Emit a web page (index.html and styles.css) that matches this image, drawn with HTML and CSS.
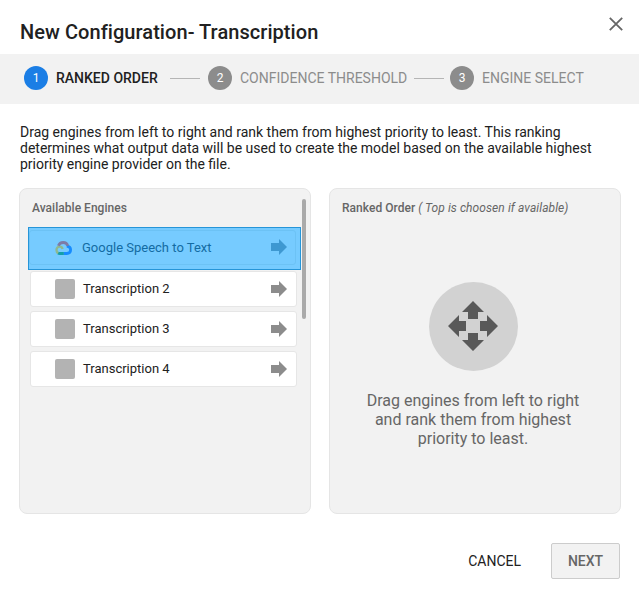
FILE: index.html
```html
<!DOCTYPE html>
<html lang="en">
<head>
<meta charset="utf-8">
<title>New Configuration- Transcription</title>
<link rel="stylesheet" href="styles.css">
</head>
<body>
<main class="dialog">
  <header class="header">
    <h1 class="title">New Configuration- Transcription</h1>
    <button class="close" aria-label="Close"><svg width="14" height="14" viewBox="0 0 14 14"><path d="M.8.8 13.2 13.2M13.2.8.8 13.2" stroke="#666" stroke-width="1.8" fill="none"/></svg></button>
  </header>
  <nav class="steps">
    <span class="num active">1</span><span class="step current">RANKED ORDER</span><i class="line"></i>
    <span class="num">2</span><span class="step threshold">CONFIDENCE THRESHOLD</span><i class="line second"></i>
    <span class="num">3</span><span class="step">ENGINE SELECT</span>
  </nav>
  <p class="intro">Drag engines from left to right and rank them from highest priority to least. This ranking<br>determines what output data will be used to create the model based on the available highest<br>priority engine provider on the file.</p>
  <div class="panels">
    <section class="panel">
      <h2 class="panel-title">Available Engines</h2>
      <div class="scrollbar"></div>
      <ul class="list">
        <li class="selected"><div class="row">
          <svg class="logo" width="17" height="14" viewBox="0 0 17 14" fill="none" stroke-width="2.8">
            <path d="M11.8 5c2.4.4 3.8 1.8 3.8 3.8 0 2.3-1.5 3.7-3.8 3.7H8.5" stroke="#168bff"/>
            <path d="M8.8 12.5H4.8c-.8 0-1.4-.2-2-.6" stroke="#129fa9"/>
            <path d="M3.2 12.1C2 11.5 1.5 10.4 1.5 9c0-2 1.3-3.4 3.2-3.4 1.5 0 2.6 1 2.9 2.4" stroke="#8fb98e" stroke-width="2.4"/>
            <path d="M3.4 4.8C4.2 2.6 6 1.5 8.2 1.5c2.2 0 3.9 1.2 4.6 3.4" stroke="#7d7ba6"/>
          </svg>
          <span class="name">Google Speech to Text</span>
          <svg class="arrow" width="16" height="16" viewBox="0 0 16 16"><path d="M0 4h8V0l8 8-8 8v-4H0z"/></svg></div></li>
        <li class="row"><i class="thumb"></i><span class="name">Transcription 2</span><svg class="arrow" width="16" height="16" viewBox="0 0 16 16"><path d="M0 4h8V0l8 8-8 8v-4H0z"/></svg></li>
        <li class="row"><i class="thumb"></i><span class="name">Transcription 3</span><svg class="arrow" width="16" height="16" viewBox="0 0 16 16"><path d="M0 4h8V0l8 8-8 8v-4H0z"/></svg></li>
        <li class="row"><i class="thumb"></i><span class="name">Transcription 4</span><svg class="arrow" width="16" height="16" viewBox="0 0 16 16"><path d="M0 4h8V0l8 8-8 8v-4H0z"/></svg></li>
      </ul>
    </section>
    <section class="panel">
      <h2 class="panel-title">Ranked Order <em>( Top is choosen if available)</em></h2>
      <div class="drop">
        <svg width="89" height="89" viewBox="0 0 89 89"><circle cx="44.5" cy="44.5" r="44.5" fill="#d2d2d2"/><path fill="#595959" d="M44 19 55 30H49V37H39V30H33zM69 44 58 55V49H51V39H58V33zM44 69 33 58H39V51H49V58H55zM19 44 30 33V39H37V49H30V55z"/></svg>
        <p class="hint">Drag engines from left to right<br>and rank them from highest<br>priority to least.</p>
      </div>
    </section>
  </div>
  <footer class="footer"><button class="cancel">CANCEL</button><button class="next">NEXT</button></footer>
</main>
</body>
</html>
```
FILE: styles.css
```css
* { box-sizing: border-box; margin: 0; padding: 0; }
body { font-family: Roboto, sans-serif; color: #212121; background: #fff; }
button { font: inherit; border: 0; background: none; color: inherit; }
svg { display: block; flex: none; }
.dialog { width: 639px; height: 598px; overflow: hidden; white-space: nowrap; }
.header { height: 54px; display: flex; justify-content: space-between; padding: 17px 16px 0 20px; }
.title { font-size: 20px; line-height: 30px; font-weight: 500; letter-spacing: .06px; }
.close { width: 14px; height: 14px; }
.steps { height: 50px; background: #f2f2f2; display: flex; align-items: center; padding: 0 0 2px 24px; color: #8c8c8c; font-size: 14px; }
.num { width: 24px; height: 24px; border-radius: 50%; background: #8c8c8c; color: #fff; font-size: 12px; line-height: 24px; text-align: center; flex: none; }
.num.active { background: #1b7ee5; }
.step { margin-left: 8px; }
.step.current { color: #212121; font-weight: 500; width: 102px; }
.step.threshold { width: 168px; }
.line { width: 30px; height: 1px; background: #b5b5b5; margin: 1px 8px 0 12px; }
.line.second { margin-left: 6px; margin-right: 6px; }
.intro { padding: 20px 20px 0; font-size: 14px; line-height: 16px; }
.panels { display: flex; gap: 18px; padding: 16px 18px 0 19px; }
.panel { position: relative; width: 292px; height: 326px; border: 1px solid #e5e5e5; border-radius: 8px; background: #f2f2f2; }
.panel-title { font-size: 12px; line-height: 16px; font-weight: 500; color: #666; padding: 11px 12px 0; letter-spacing: .03px; }
.panel-title em { font-weight: 400; letter-spacing: .08px; }
.scrollbar { position: absolute; left: 282px; top: 10px; width: 4px; height: 120px; border-radius: 2px; background: #aaa; }
.list { list-style: none; padding: 11px 0 0 10px; display: flex; flex-direction: column; gap: 4px; }
.row { width: 267px; height: 36px; display: flex; align-items: center; border: 1px solid #e6e6e6; border-radius: 3px; background: #fff; padding: 0 9px 0 24px; }
.thumb { width: 20px; height: 20px; border-radius: 2px; background: #b3b3b3; }
.name { font-size: 13px; margin-left: 8px; padding-bottom: 2px; }
.arrow { margin-left: auto; fill: #8c8c8c; }
.selected { width: 273px; height: 43px; margin: 0 0 -3px -2px; padding: 2px 0 0; border: 1px solid #2695d8; background: #76cbff; }
.selected .row { background: transparent; border-color: #6cc2f5; color: #136ba3; width: 267px; height: 35px; padding: 0 8px 1px 24px; }
.selected .logo { margin-left: 1px; margin-top: 1px; }
.selected .name { margin-left: 10px; padding-bottom: 0; }
.selected .arrow { fill: #3e98d1; }
.drop { display: flex; flex-direction: column; align-items: center; padding-top: 66px; }
.drop svg { margin-right: 3px; }
.hint { margin-top: 20px; margin-right: 4px; font-size: 16px; line-height: 19px; text-align: center; color: #666; }
.footer { display: flex; justify-content: flex-end; padding: 29px 19px 0 0; font-size: 14px; }
.cancel { margin-right: 30px; }
.next { width: 69px; height: 36px; border: 1px solid #ccc; border-radius: 2px; background: #f2f2f2; color: #666; font-weight: 500; }
```
